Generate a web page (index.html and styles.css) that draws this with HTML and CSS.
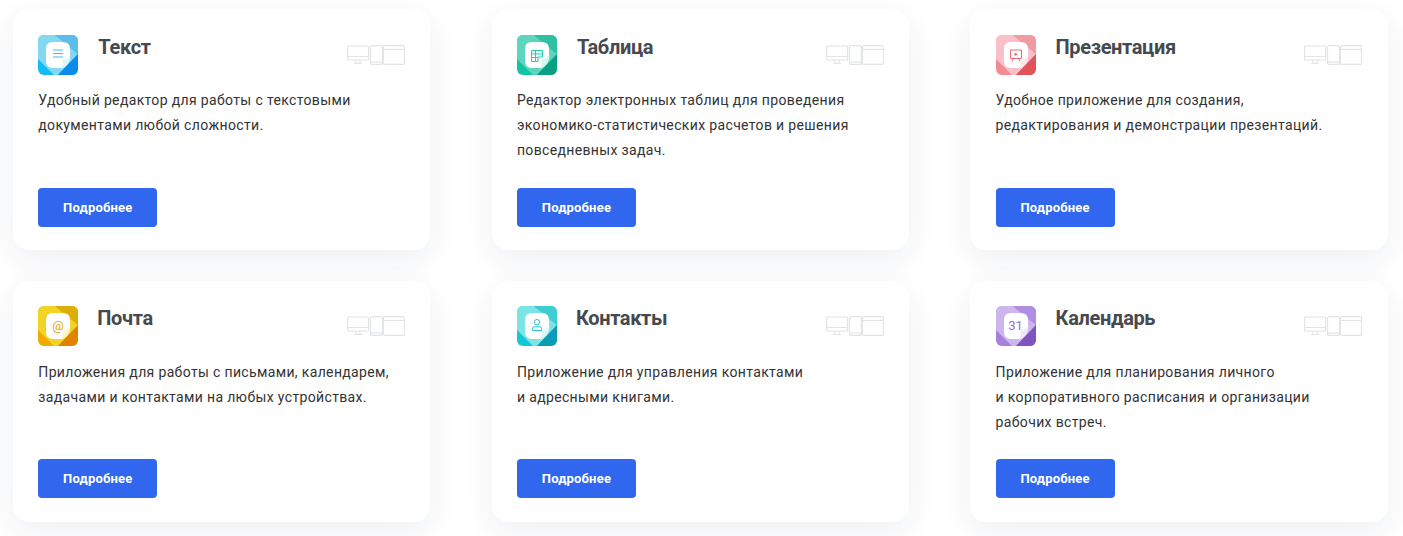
FILE: index.html
```html
<!DOCTYPE html>
<html lang="ru">
<head>
<meta charset="utf-8">
<title>Приложения</title>
<link rel="stylesheet" href="styles.css">
</head>
<body>
<svg class="defs" width="0" height="0" aria-hidden="true">
  <symbol id="tile" viewBox="0 0 40 40">
    <rect width="40" height="40" rx="6" fill="var(--base)"/>
    <path d="M6 0H17L40 19L20 40H16L0 24V6A6 6 0 0 1 6 0Z" fill="var(--corner)"/>
    <path d="M17 0H34A6 6 0 0 1 40 6V19Z" fill="var(--band)"/>
    <path d="M40 19V34A6 6 0 0 1 34 40H20Z" fill="var(--dark)"/>
    <path d="M15 7H25Q32 7 32 14V21L23 33H15Q8 33 8 26V14Q8 7 15 7Z" fill="#fff"/>
    <path d="M32.500 20Q32.500 30 23 34Q25.500 28 24.500 24.500Q29 25 32.500 20Z" fill="var(--curl)"/>
  </symbol>
  <symbol id="devices" viewBox="0 0 58 20">
    <g fill="none" stroke="#e3e4e7" stroke-width="1.2">
      <rect x=".6" y="1" width="21" height="14" rx="1"/>
      <path d="M.6 11.500H21.600M9 15V18.500M13 15V18.500M7 18.500H15"/>
      <rect x="23.500" y=".6" width="12" height="18.800" rx="2"/>
      <path d="M23.500 17H35.500"/>
      <rect x="36.500" y=".6" width="21" height="18.800" rx="1.500"/>
      <path d="M36.500 4.500H57.500"/>
    </g>
  </symbol>
</svg>
<main class="grid">
  <article class="card theme-text">
    <header class="head">
      <svg class="tile" viewBox="0 0 40 40"><use href="#tile"/><path class="glyph" d="M15 15H25M15 18.500H25M15 22H25"/></svg>
      <h2 class="title">Текст</h2>
      <svg class="devices"><use href="#devices"/></svg>
    </header>
    <p class="desc">Удобный редактор для работы с текстовыми<br>документами любой сложности.</p>
    <a class="btn" href="#">Подробнее</a>
  </article>
  <article class="card theme-table">
    <header class="head">
      <svg class="tile" viewBox="0 0 40 40"><use href="#tile"/><path class="glyph" d="M14.500 15.500H25.500V22H21V26.500H14.500ZM14.500 19H25.500M14.500 22.500H21M18.500 15.500V26.500"/></svg>
      <h2 class="title">Таблица</h2>
      <svg class="devices"><use href="#devices"/></svg>
    </header>
    <p class="desc">Редактор электронных таблиц для проведения<br>экономико-статистических расчетов и решения<br>повседневных задач.</p>
    <a class="btn" href="#">Подробнее</a>
  </article>
  <article class="card theme-pres">
    <header class="head">
      <svg class="tile" viewBox="0 0 40 40"><use href="#tile"/><path class="glyph" d="M14.500 15H25.500V23.500H14.500ZM17.500 23.500L16 26.500M22.500 23.500L24 26.500"/><path class="dot" d="M18.500 17.500L22 19.250L18.500 21Z"/></svg>
      <h2 class="title">Презентация</h2>
      <svg class="devices"><use href="#devices"/></svg>
    </header>
    <p class="desc">Удобное приложение для создания,<br>редактирования и демонстрации презентаций.</p>
    <a class="btn" href="#">Подробнее</a>
  </article>
  <article class="card theme-mail">
    <header class="head head-alt">
      <svg class="tile" viewBox="0 0 40 40"><use href="#tile"/><text class="glyph-text" x="20" y="24" text-anchor="middle">@</text></svg>
      <h2 class="title">Почта</h2>
      <svg class="devices"><use href="#devices"/></svg>
    </header>
    <p class="desc">Приложения для работы с письмами, календарем,<br>задачами и контактами на любых устройствах.</p>
    <a class="btn" href="#">Подробнее</a>
  </article>
  <article class="card theme-contacts">
    <header class="head head-alt">
      <svg class="tile" viewBox="0 0 40 40"><use href="#tile"/><path class="glyph" d="M20 13.500A2.700 2.700 0 1 1 20 18.900A2.700 2.700 0 1 1 20 13.500ZM15.500 24.500V22.500Q15.500 20.800 17.200 20.800H22.800Q24.500 20.800 24.500 22.500V24.500Z"/></svg>
      <h2 class="title">Контакты</h2>
      <svg class="devices"><use href="#devices"/></svg>
    </header>
    <p class="desc">Приложение для управления контактами<br>и адресными книгами.</p>
    <a class="btn" href="#">Подробнее</a>
  </article>
  <article class="card theme-cal">
    <header class="head">
      <svg class="tile" viewBox="0 0 40 40"><use href="#tile"/><text class="glyph-text" x="19.500" y="24" text-anchor="middle">31</text></svg>
      <h2 class="title">Календарь</h2>
      <svg class="devices"><use href="#devices"/></svg>
    </header>
    <p class="desc">Приложение для планирования личного<br>и корпоративного расписания и организации<br>рабочих встреч.</p>
    <a class="btn" href="#">Подробнее</a>
  </article>
</main>
</body>
</html>
```
FILE: styles.css
```css
* { box-sizing: border-box; }
html, body { margin: 0; height: 536px; overflow: hidden; background: #fff; }
body { font-family: Roboto, "Liberation Sans", sans-serif; color: #333; }
.defs { position: absolute; }
.grid {
  display: grid;
  grid-template-columns: repeat(3, 417.400px);
  column-gap: 61.250px;
  row-gap: 30.600px;
  padding: 9px 0 0 13px;
}
.card {
  height: 241px;
  padding: 25.800px 25.300px 23.200px;
  background: #fff;
  border-radius: 16px;
  box-shadow: 0 10px 32px rgba(30, 45, 80, .07);
  display: flex;
  flex-direction: column;
}
.head { display: flex; align-items: flex-start; height: 40px; }
.tile { width: 40px; height: 40px; flex: none; }
.title {
  margin: 0 0 0 20px;
  flex: 1;
  font-size: 20px;
  line-height: 24px;
  font-weight: 700;
  letter-spacing: -.35px;
  color: #46494e;
}
.head-alt .title { margin-left: 19px; }
.devices { width: 58px; height: 20px; flex: none; margin-top: 10px; }
.desc {
  margin: 13.500px 0 0;
  font-size: 14px;
  line-height: 25px;
  letter-spacing: .35px;
  color: #333;
}
.btn {
  margin-top: auto;
  width: 119px;
  height: 39px;
  display: flex;
  align-items: center;
  justify-content: center;
  background: #3067ee;
  color: #fff;
  border-radius: 4px;
  font-size: 13px;
  font-weight: 700;
  letter-spacing: .2px;
  text-decoration: none;
}
.glyph { fill: none; stroke: var(--glyph); stroke-width: 1; }
.dot { fill: var(--glyph); }
.glyph-text { fill: var(--glyph); font-family: Roboto, sans-serif; font-size: 13px; }
.theme-text { --base: #12bdf3; --band: #5cbdea; --corner: #84d8ef; --dark: #0a8ce8; --curl: #dff5fd; --glyph: #3cc0ee; }
.theme-table { --base: #10c6a2; --band: #2fc0a2; --corner: #5ed6bd; --dark: #08a083; --curl: #d6f6ef; --glyph: #1fd3b0; }
.theme-pres { --base: #f28a93; --band: #f09aa3; --corner: #f8c0c8; --dark: #e0535b; --curl: #fde6e8; --glyph: #e86a72; }
.theme-mail { --base: #eeaa00; --band: #dcae08; --corner: #f2d426; --dark: #e08400; --curl: #fdf2cc; --glyph: #eba400; }
.theme-contacts { --base: #10c8d6; --band: #3fcdd2; --corner: #7ce4e4; --dark: #0a9cb4; --curl: #d8f6f7; --glyph: #25c4d4; }
.theme-cal { --base: #a880dc; --band: #b08fe2; --corner: #cdb6ee; --dark: #8054c0; --curl: #eee6fa; --glyph: #9a6ed6; }
```
